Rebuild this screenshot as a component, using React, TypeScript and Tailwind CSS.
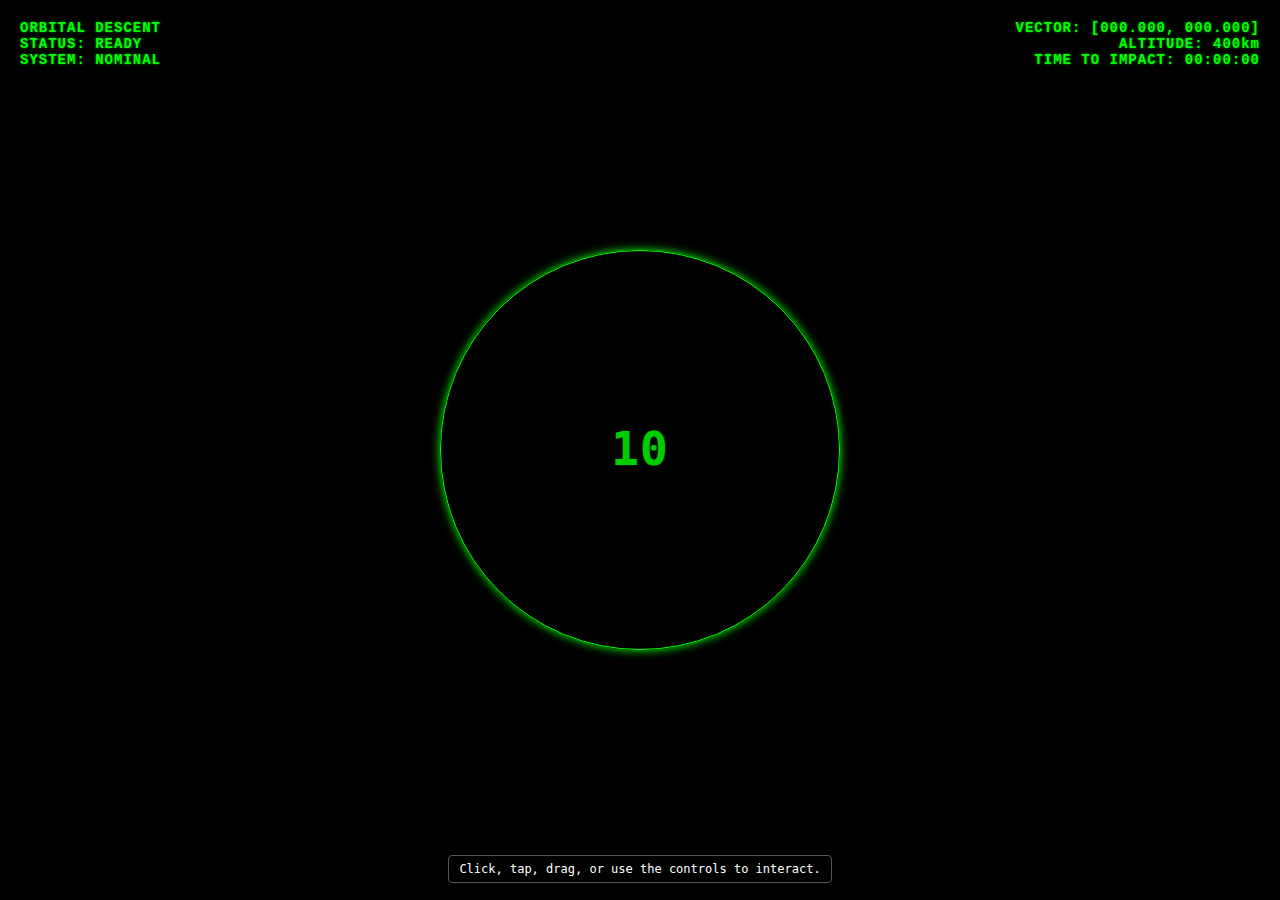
export default function App() {
  const hud = "font-['Liberation_Mono','Courier_New',monospace] font-bold text-[14px] leading-[16px] tracking-[1px] text-[#00ff00] [text-shadow:0_0_3px_rgba(0,255,0,0.6)]";
  return (
    <div className="relative w-full h-[900px] bg-black overflow-hidden">
      <div className={`absolute left-5 top-5 ${hud}`}>
        <div>ORBITAL DESCENT</div>
        <div>STATUS: READY</div>
        <div>SYSTEM: NOMINAL</div>
      </div>
      <div className={`absolute right-5 top-5 text-right ${hud}`}>
        <div>VECTOR: [000.000, 000.000]</div>
        <div>ALTITUDE: 400km</div>
        <div>TIME TO IMPACT: 00:00:00</div>
      </div>
      <div className="flex h-full items-center justify-center">
        <div className="w-[400px] h-[400px] rounded-full border border-[#00ff00] shadow-[0_0_10px_#00ff00] flex items-center justify-center">
          <span className="font-['DejaVu_Sans_Mono',monospace] font-bold text-[46px] leading-none tracking-[1px] text-[#00cc00] [text-shadow:0_0_2px_rgba(0,204,0,0.5)] -mt-[2px]">10</span>
        </div>
      </div>
      <div className="absolute bottom-[17px] left-0 right-0 flex justify-center">
        <div className="rounded border border-[#555] bg-[rgba(0,0,0,0.7)] px-[10px] py-[5px] font-['DejaVu_Sans_Mono',monospace] text-[12px] leading-[16px] text-white">
          Click, tap, drag, or use the controls to interact.
        </div>
      </div>
    </div>
  );
}
